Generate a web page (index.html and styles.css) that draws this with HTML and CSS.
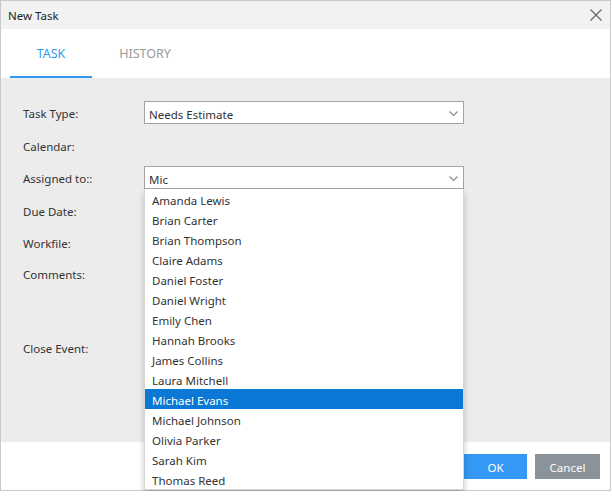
FILE: index.html
```html
<!DOCTYPE html>
<html lang="en">
<head>
    <meta charset="UTF-8">
    <title>New Task</title>
    <link rel="stylesheet" href="styles.css">
</head>
<body>

<div class="dialog">
    <div class="titlebar">
        <span class="title">New Task</span>
        <button class="btn-close" title="Close">
            <svg width="12" height="12" viewBox="0 0 12 12"><path d="M0.5 0.5 L11.5 11.5 M11.5 0.5 L0.5 11.5" stroke="#6b6b6b" stroke-width="1.4" fill="none"/></svg>
        </button>
    </div>

    <div class="tabs">
        <div class="tab active">TASK</div>
        <div class="tab">HISTORY</div>
    </div>

    <div class="form">
        <div class="row">
            <label>Task Type:</label>
            <div class="combo">
                <span>Needs Estimate</span>
                <svg class="chevron" width="9" height="5" viewBox="0 0 9 5"><path d="M0.5 0.5 L4.5 4.5 L8.5 0.5" stroke="#8a8a8a" stroke-width="1.1" fill="none"/></svg>
            </div>
        </div>
        <div class="row">
            <label>Calendar:</label>
        </div>
        <div class="row">
            <label>Assigned to::</label>
            <div class="combo">
                <span>Mic</span>
                <svg class="chevron" width="9" height="5" viewBox="0 0 9 5"><path d="M0.5 0.5 L4.5 4.5 L8.5 0.5" stroke="#8a8a8a" stroke-width="1.1" fill="none"/></svg>
                <ul class="dropdown" id="dropdown"></ul>
            </div>
        </div>
        <div class="row">
            <label>Due Date:</label>
        </div>
        <div class="row">
            <label>Workfile:</label>
        </div>
        <div class="row row-tall">
            <label>Comments:</label>
        </div>
        <div class="row">
            <label>Close Event:</label>
        </div>
    </div>

    <div class="footer">
        <button class="btn-ok">OK</button>
        <button class="btn-cancel">Cancel</button>
    </div>
</div>

<script>
    const people = [
        "Amanda Lewis", "Brian Carter", "Brian Thompson", "Claire Adams",
        "Daniel Foster", "Daniel Wright", "Emily Chen", "Hannah Brooks",
        "James Collins", "Laura Mitchell", "Michael Evans", "Michael Johnson",
        "Olivia Parker", "Sarah Kim", "Thomas Reed"
    ];
    const selected = "Michael Evans";
    const list = document.getElementById('dropdown');

    people.forEach(name => {
        const li = document.createElement('li');
        li.textContent = name;
        if (name === selected) li.className = 'selected';
        list.appendChild(li);
    });
</script>

</body>
</html>
```

FILE: styles.css
```css
:root {
    --border: #c9c9c9;
    --title-bg: #f2f2f2;
    --form-bg: #ececec;
    --text: #333333;
    --blue: #3399ee;
    --select-blue: #0a78d4;
}

* {
    box-sizing: border-box;
    margin: 0;
    padding: 0;
}

body {
    font-family: 'Noto Sans', 'Open Sans', sans-serif;
    font-size: 11.5px;
    color: var(--text);
    background: #ffffff;
}

.dialog {
    width: 611px;
    height: 491px;
    border: 1px solid var(--border);
    display: flex;
    flex-direction: column;
}

/* Title bar */
.titlebar {
    height: 28px;
    flex-shrink: 0;
    background: var(--title-bg);
    display: flex;
    align-items: center;
    justify-content: space-between;
    padding: 0 7px 0 7px;
}

.title {
    font-size: 11.5px;
    color: #222;
    padding-top: 1px;
}

.btn-close {
    background: transparent;
    border: none;
    width: 12px;
    height: 12px;
    display: flex;
    margin-right: 1px;
}

/* Tabs */
.tabs {
    height: 49px;
    flex-shrink: 0;
    background: #fff;
    display: flex;
    padding-left: 9px;
}

.tab {
    width: 82px;
    height: 49px;
    display: flex;
    align-items: center;
    justify-content: center;
    font-size: 12.5px;
    color: #9a9a9a;
    border-bottom: 2px solid transparent;
    padding-top: 2px;
    margin-right: 12px;
}

.tab.active {
    color: var(--blue);
    border-bottom-color: var(--blue);
}

/* Form */
.form {
    flex-grow: 1;
    background: var(--form-bg);
    padding: 23px 0 0 22px;
    display: flex;
    flex-direction: column;
    gap: 9.5px;
}

.row {
    height: 23px;
    display: flex;
    align-items: center;
}

.row-tall {
    height: 62.5px;
    align-items: flex-start;
    padding-top: 1px;
}

.row label {
    width: 121px;
    flex-shrink: 0;
    padding-top: 2px;
}

.combo {
    position: relative;
    width: 320px;
    height: 23px;
    background: #fff;
    border: 1px solid #a3a3a3;
    display: flex;
    align-items: center;
    justify-content: space-between;
    padding: 0 5px 0 4px;
}

.combo span {
    padding-top: 3px;
}

.chevron {
    margin-top: 1px;
}

.dropdown {
    position: absolute;
    top: 22px;
    left: -1px;
    width: 320px;
    list-style: none;
    background: #fff;
    border: 1px solid #d6d6d6;
    border-top: none;
    box-shadow: 0 4px 6px rgba(0, 0, 0, 0.22);
    z-index: 10;
}

.dropdown li {
    height: 20px;
    line-height: 17px;
    padding: 3px 0 0 7px;
    color: #333;
}

.dropdown li.selected {
    background: var(--select-blue);
    color: #fff;
}

/* Footer */
.footer {
    height: 48px;
    flex-shrink: 0;
    background: #fff;
    display: flex;
    justify-content: flex-end;
    align-items: flex-start;
    gap: 8px;
    padding: 12px 10px 0 0;
}

.footer button {
    height: 25px;
    border: none;
    color: #fff;
    font-family: inherit;
    font-size: 11.5px;
    padding-top: 2px;
}

.btn-ok {
    width: 63px;
    background: #3399f5;
}

.btn-cancel {
    width: 65px;
    background: #8a939b;
}
```
